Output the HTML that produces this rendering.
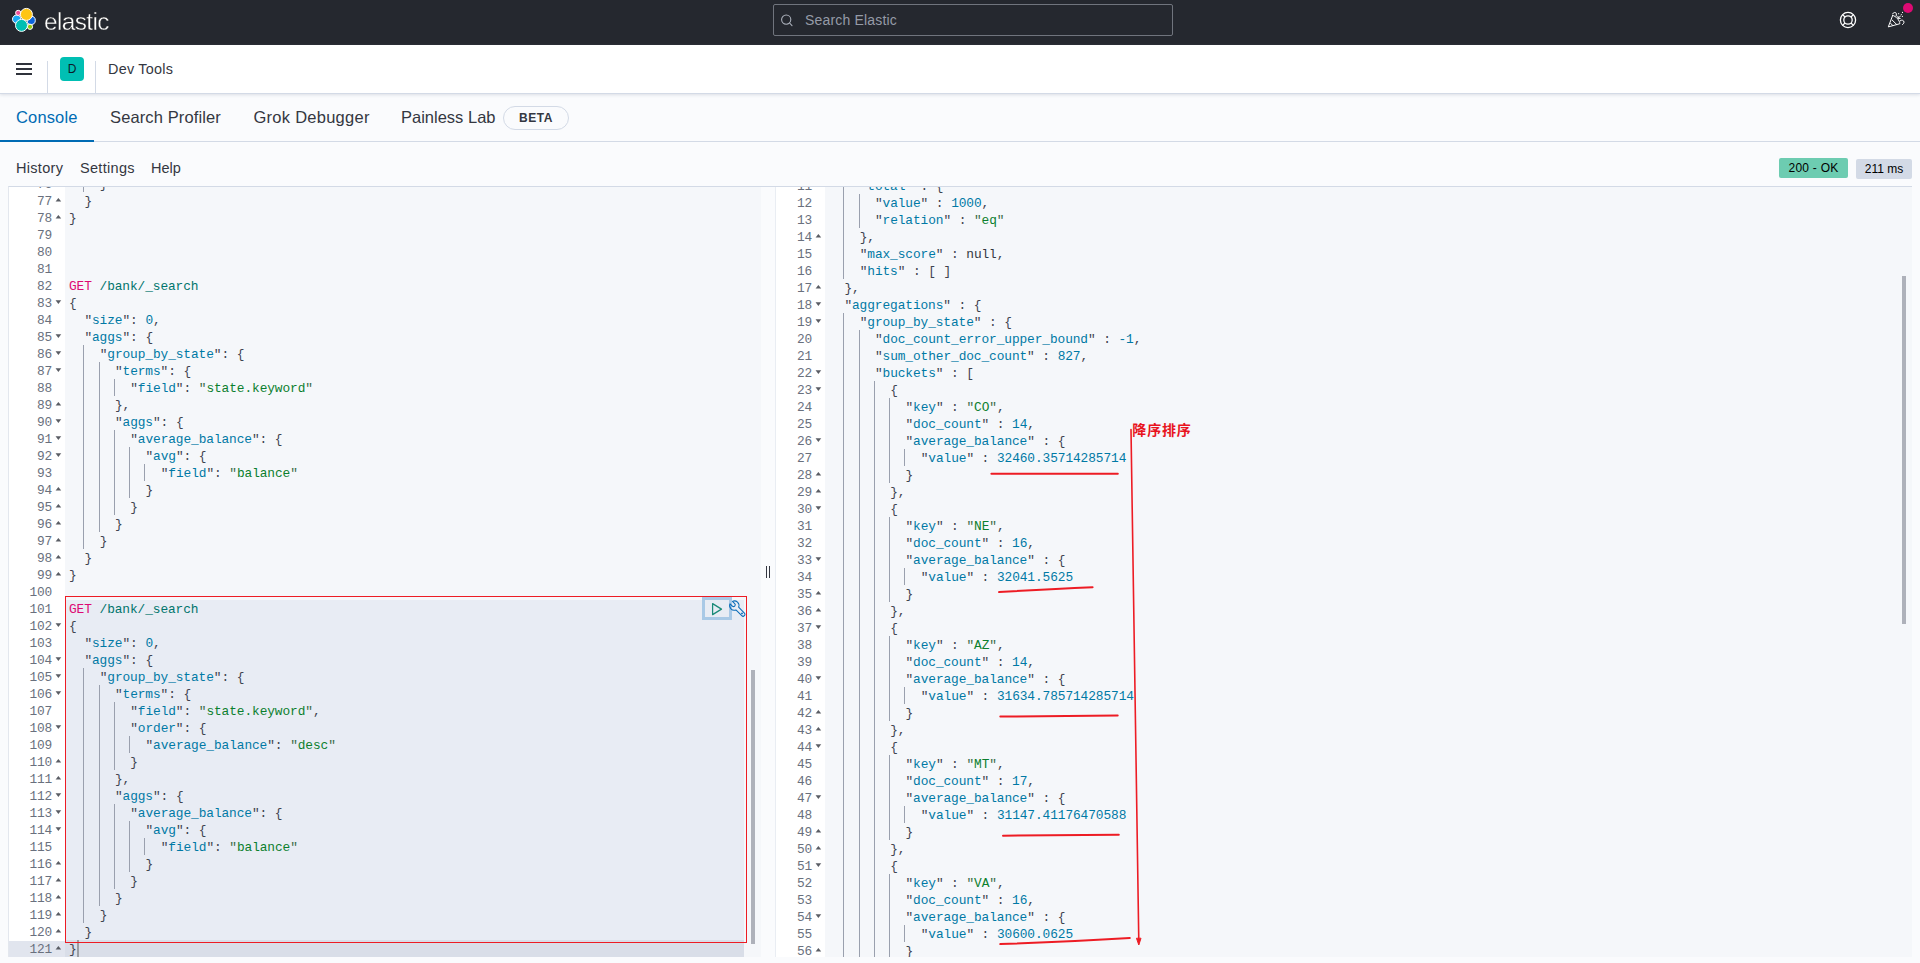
<!DOCTYPE html>
<html lang="en">
<head>
<meta charset="utf-8">
<title>Console - Dev Tools - Elastic</title>
<style>
*{box-sizing:border-box;margin:0;padding:0}
html,body{width:1920px;height:963px;overflow:hidden}
body{position:relative;background:#fafbfd;font-family:"Liberation Sans","Noto Sans CJK SC",sans-serif;color:#343741}
.abs{position:absolute;white-space:nowrap}
/* top dark header */
#top{position:absolute;left:0;top:0;width:1920px;height:45px;background:#25282f}
#brand{position:absolute;left:44px;top:6.5px;font-size:24.4px;line-height:30px;color:#fff;letter-spacing:-0.6px;-webkit-text-stroke:.4px #25282f;filter:grayscale(1)}
#search{position:absolute;left:773px;top:4px;width:400px;height:32px;border:1px solid #70747d;border-radius:2px;background:#25282f}
#search span{position:absolute;left:31px;top:7px;font-size:14px;line-height:16px;color:#959ba7;letter-spacing:.18px}
/* second header */
#bar{position:absolute;left:0;top:45px;width:1920px;height:49px;background:#fff;border-bottom:1px solid #d3dae6;box-shadow:0 1px 3px rgba(152,162,179,.3)}
.vdiv{position:absolute;top:61px;width:1px;height:32px;background:#d3dae6}
#avatar{position:absolute;left:60px;top:57px;width:24px;height:24px;border-radius:4px;background:#00bfb3;color:#0b1a2a;font-size:12px;line-height:24px;text-align:center}
#crumb{left:108px;top:61px;font-size:14.4px;line-height:16px;color:#343741;letter-spacing:.25px}
/* tabs */
.tab{top:107px;font-size:16.5px;line-height:20px;color:#343741}
#tabline{position:absolute;left:0;top:141px;width:1920px;height:1px;background:#d3dae6}
#tabsel{position:absolute;left:0;top:140px;width:94px;height:2px;background:#006bb4}
#beta{position:absolute;left:503px;top:106px;width:66px;height:24px;border:1px solid #d3dae6;border-radius:12px;font-size:12px;font-weight:bold;line-height:22px;text-align:center;letter-spacing:.6px;color:#343741}
.menu{top:160px;font-size:14px;line-height:16px;color:#343741}
.badge{position:absolute;font-size:12px;line-height:20px;text-align:center;border-radius:2px;color:#000;white-space:nowrap}
/* editors */
.ed{position:absolute;top:186px;height:771px;overflow:hidden;background:#f5f7fa;border-top:1px solid #d3dae6;font-family:"Liberation Mono","DejaVu Sans Mono",monospace;font-size:12.83px;line-height:17px}
.gut{position:absolute;left:0;top:0;height:771px;background:#fff;color:#69707d;text-align:right}
.gl{height:17px;padding-right:13.2px;position:relative;white-space:pre;letter-spacing:-.3px}
.ga{background:#e1e5ee}
.fo,.fc{position:absolute;right:4px;top:5px;width:0;height:0;border-left:3px solid transparent;border-right:3px solid transparent}
.fo{border-top:4px solid #5a5d64;transform:translate(.4px,.2px) scale(.94,.95)}
.fc{border-bottom:4px solid #5a5d64;top:5px;transform:translate(.4px,-.2px) scale(.94,.86)}
.code{position:absolute;top:0;height:771px;color:#343741}
.ln{height:17px;white-space:pre;position:relative}
.ln span{letter-spacing:-.09px}
.ig{display:inline-block;width:15.28px;height:17px;vertical-align:top;position:relative;top:-1px;background:linear-gradient(#9aa0ae,#9aa0ae) right top/1px 100% no-repeat}
.m{color:#dd0a73}.u{color:#00756c}.v{color:#0079a5}.s{color:#0b7f2e}.sq{color:#3a6b47}.n{color:#0079a5}.k{color:#343741}.p{color:#3f4450}
.inner{position:absolute;left:0;width:100%}
</style>
</head>
<body>
<div id="top">
  <svg class="abs" style="left:10px;top:6px" width="28" height="28" viewBox="10 6 28 28">
    <g stroke="#fff" stroke-width="1">
      <circle cx="16.7" cy="19.2" r="4.2" fill="#1ba9f5"/>
      <circle cx="31.2" cy="20.4" r="4.1" fill="#0b64dd"/>
      <circle cx="18.2" cy="12.9" r="2.6" fill="#f04e98"/>
      <circle cx="30" cy="26.8" r="2.6" fill="#93c90e"/>
      <circle cx="26.4" cy="14.4" r="6" fill="#fec514"/>
      <circle cx="21.5" cy="25.4" r="6" fill="#00bfb3"/>
    </g>
  </svg>
  <div id="brand" class="abs">elastic</div>
  <div id="search">
    <svg class="abs" style="left:5px;top:6.7px" width="16" height="16" viewBox="0 0 16 16" fill="none" stroke="#abb0bb" stroke-width="1.1" stroke-linecap="round"><circle cx="7.2" cy="7.6" r="4.6"/><path d="M10.6 11 L13 13.6"/></svg>
    <span>Search Elastic</span>
  </div>
  <svg class="abs" style="left:1839px;top:11px" width="18" height="18" viewBox="0 0 18 18" fill="none" stroke="#fff" stroke-width="1.3"><circle cx="9" cy="9" r="7.6"/><circle cx="9" cy="9" r="4.2"/><path d="M3.6 3.6l2.4 2.4M14.4 3.6l-2.4 2.4M3.6 14.4l2.4-2.4M14.4 14.4l-2.4-2.4"/></svg>
  <svg class="abs" style="left:1884px;top:8px" width="24" height="24" viewBox="1884 8 24 24" fill="none" stroke="#fff" stroke-width="1" stroke-linejoin="round" stroke-linecap="round"><path d="M1892.7 15.4 L1888.3 26.9 L1899.9 23.7 C1899.6 20.4 1896.2 16.2 1892.7 15.4 Z"/><path d="M1892.3 20.2 L1896.7 24.5 M1890.7 23.4 L1892.9 25.6"/><path d="M1892.7 13.7 C1893.3 12 1896.2 12 1896.4 13.8 C1896.5 14.8 1896 15.2 1896.1 16"/><path d="M1900.3 20.7 C1901.8 19.4 1904.1 20.4 1904 22.2 C1903.9 23.4 1903.1 24.2 1902.4 24.6"/><path d="M1898 18.2 L1900.4 16.2 M1897.9 16.3 L1898 18.2 L1900.2 18.5"/><path d="M1898.7 13.6v.1M1901.3 14.5v.1M1902.5 12.4v.1M1902.4 16.4v.1" stroke-width="1.15"/></svg>
  <div class="abs" style="left:1902.7px;top:2.7px;width:10.6px;height:10.6px;border-radius:6px;background:#dd0a73"></div>
</div>
<div id="bar"></div>
<svg class="abs" style="left:16px;top:61px" width="16" height="16" viewBox="0 0 16 16" fill="#2f323b"><rect x="0" y="2" width="16" height="2"/><rect x="0" y="7" width="16" height="2"/><rect x="0" y="12" width="16" height="2"/></svg>
<div class="vdiv" style="left:47px"></div>
<div id="avatar">D</div>
<div class="vdiv" style="left:95px"></div>
<div id="crumb" class="abs">Dev Tools</div>

<div id="tabline"></div><div id="tabsel"></div>
<div class="abs tab" style="left:16px;color:#006bb4;letter-spacing:.15px">Console</div>
<div class="abs tab" style="left:110px;letter-spacing:.12px">Search Profiler</div>
<div class="abs tab" style="left:253.5px;letter-spacing:.26px">Grok Debugger</div>
<div class="abs tab" style="left:401px">Painless Lab</div>
<div id="beta">BETA</div>

<div class="abs menu" style="left:16px;font-size:14.5px;letter-spacing:.3px">History</div>
<div class="abs menu" style="left:80px;font-size:14.5px;letter-spacing:.3px">Settings</div>
<div class="abs menu" style="left:151px;font-size:14.5px;letter-spacing:0">Help</div>
<div class="badge" style="left:1779px;top:158px;width:69px;height:20px;background:#6dccb1;letter-spacing:.25px">200 - OK</div>
<div class="badge" style="left:1856px;top:159px;width:56px;height:20px;background:#d3dae6">211 ms</div>

<div class="abs" style="left:8px;top:186px;width:1904px;height:1px;background:#d3dae6"></div>
<!-- left editor -->
<div class="ed" id="edl" style="left:8px;width:753px;border-left:1px solid #e3e7ee">
  <div class="abs" style="left:56px;top:413px;width:679px;height:340px;background:#e8ecf4"></div>
  <div class="abs" style="left:56px;top:753px;width:679px;height:17px;background:#d9dee8"></div>
  <div class="gut" style="width:56px"><div class="inner" style="top:-11px">
<div class="gl">76<i class="fc"></i></div>
<div class="gl">77<i class="fc"></i></div>
<div class="gl">78<i class="fc"></i></div>
<div class="gl">79</div>
<div class="gl">80</div>
<div class="gl">81</div>
<div class="gl">82</div>
<div class="gl">83<i class="fo"></i></div>
<div class="gl">84</div>
<div class="gl">85<i class="fo"></i></div>
<div class="gl">86<i class="fo"></i></div>
<div class="gl">87<i class="fo"></i></div>
<div class="gl">88</div>
<div class="gl">89<i class="fc"></i></div>
<div class="gl">90<i class="fo"></i></div>
<div class="gl">91<i class="fo"></i></div>
<div class="gl">92<i class="fo"></i></div>
<div class="gl">93</div>
<div class="gl">94<i class="fc"></i></div>
<div class="gl">95<i class="fc"></i></div>
<div class="gl">96<i class="fc"></i></div>
<div class="gl">97<i class="fc"></i></div>
<div class="gl">98<i class="fc"></i></div>
<div class="gl">99<i class="fc"></i></div>
<div class="gl">100</div>
<div class="gl">101</div>
<div class="gl">102<i class="fo"></i></div>
<div class="gl">103</div>
<div class="gl">104<i class="fo"></i></div>
<div class="gl">105<i class="fo"></i></div>
<div class="gl">106<i class="fo"></i></div>
<div class="gl">107</div>
<div class="gl">108<i class="fo"></i></div>
<div class="gl">109</div>
<div class="gl">110<i class="fc"></i></div>
<div class="gl">111<i class="fc"></i></div>
<div class="gl">112<i class="fo"></i></div>
<div class="gl">113<i class="fo"></i></div>
<div class="gl">114<i class="fo"></i></div>
<div class="gl">115</div>
<div class="gl">116<i class="fc"></i></div>
<div class="gl">117<i class="fc"></i></div>
<div class="gl">118<i class="fc"></i></div>
<div class="gl">119<i class="fc"></i></div>
<div class="gl">120<i class="fc"></i></div>
<div class="gl ga">121<i class="fc"></i></div>
  </div></div>
  <div class="code" style="left:60px;width:690px"><div class="inner" style="top:-11px">
<div class="ln"><span class="ig">  </span>  <span class="p">}</span></div>
<div class="ln">  <span class="p">}</span></div>
<div class="ln"><span class="p">}</span></div>
<div class="ln"></div>
<div class="ln"></div>
<div class="ln"></div>
<div class="ln"><span class="m">GET</span> <span class="u">/bank/_search</span></div>
<div class="ln"><span class="p">{</span></div>
<div class="ln">  <span class="p">"</span><span class="v">size</span><span class="p">"</span><span class="p">:</span> <span class="n">0</span><span class="p">,</span></div>
<div class="ln">  <span class="p">"</span><span class="v">aggs</span><span class="p">"</span><span class="p">:</span> <span class="p">{</span></div>
<div class="ln"><span class="ig">  </span>  <span class="p">"</span><span class="v">group_by_state</span><span class="p">"</span><span class="p">:</span> <span class="p">{</span></div>
<div class="ln"><span class="ig">  </span><span class="ig">  </span>  <span class="p">"</span><span class="v">terms</span><span class="p">"</span><span class="p">:</span> <span class="p">{</span></div>
<div class="ln"><span class="ig">  </span><span class="ig">  </span><span class="ig">  </span>  <span class="p">"</span><span class="v">field</span><span class="p">"</span><span class="p">:</span> <span class="sq">"</span><span class="s">state.keyword</span><span class="sq">"</span></div>
<div class="ln"><span class="ig">  </span><span class="ig">  </span>  <span class="p">}</span><span class="p">,</span></div>
<div class="ln"><span class="ig">  </span><span class="ig">  </span>  <span class="p">"</span><span class="v">aggs</span><span class="p">"</span><span class="p">:</span> <span class="p">{</span></div>
<div class="ln"><span class="ig">  </span><span class="ig">  </span><span class="ig">  </span>  <span class="p">"</span><span class="v">average_balance</span><span class="p">"</span><span class="p">:</span> <span class="p">{</span></div>
<div class="ln"><span class="ig">  </span><span class="ig">  </span><span class="ig">  </span><span class="ig">  </span>  <span class="p">"</span><span class="v">avg</span><span class="p">"</span><span class="p">:</span> <span class="p">{</span></div>
<div class="ln"><span class="ig">  </span><span class="ig">  </span><span class="ig">  </span><span class="ig">  </span><span class="ig">  </span>  <span class="p">"</span><span class="v">field</span><span class="p">"</span><span class="p">:</span> <span class="sq">"</span><span class="s">balance</span><span class="sq">"</span></div>
<div class="ln"><span class="ig">  </span><span class="ig">  </span><span class="ig">  </span><span class="ig">  </span>  <span class="p">}</span></div>
<div class="ln"><span class="ig">  </span><span class="ig">  </span><span class="ig">  </span>  <span class="p">}</span></div>
<div class="ln"><span class="ig">  </span><span class="ig">  </span>  <span class="p">}</span></div>
<div class="ln"><span class="ig">  </span>  <span class="p">}</span></div>
<div class="ln">  <span class="p">}</span></div>
<div class="ln"><span class="p">}</span></div>
<div class="ln"></div>
<div class="ln"><span class="m">GET</span> <span class="u">/bank/_search</span></div>
<div class="ln"><span class="p">{</span></div>
<div class="ln">  <span class="p">"</span><span class="v">size</span><span class="p">"</span><span class="p">:</span> <span class="n">0</span><span class="p">,</span></div>
<div class="ln">  <span class="p">"</span><span class="v">aggs</span><span class="p">"</span><span class="p">:</span> <span class="p">{</span></div>
<div class="ln"><span class="ig">  </span>  <span class="p">"</span><span class="v">group_by_state</span><span class="p">"</span><span class="p">:</span> <span class="p">{</span></div>
<div class="ln"><span class="ig">  </span><span class="ig">  </span>  <span class="p">"</span><span class="v">terms</span><span class="p">"</span><span class="p">:</span> <span class="p">{</span></div>
<div class="ln"><span class="ig">  </span><span class="ig">  </span><span class="ig">  </span>  <span class="p">"</span><span class="v">field</span><span class="p">"</span><span class="p">:</span> <span class="sq">"</span><span class="s">state.keyword</span><span class="sq">"</span><span class="p">,</span></div>
<div class="ln"><span class="ig">  </span><span class="ig">  </span><span class="ig">  </span>  <span class="p">"</span><span class="v">order</span><span class="p">"</span><span class="p">:</span> <span class="p">{</span></div>
<div class="ln"><span class="ig">  </span><span class="ig">  </span><span class="ig">  </span><span class="ig">  </span>  <span class="p">"</span><span class="v">average_balance</span><span class="p">"</span><span class="p">:</span> <span class="sq">"</span><span class="s">desc</span><span class="sq">"</span></div>
<div class="ln"><span class="ig">  </span><span class="ig">  </span><span class="ig">  </span>  <span class="p">}</span></div>
<div class="ln"><span class="ig">  </span><span class="ig">  </span>  <span class="p">}</span><span class="p">,</span></div>
<div class="ln"><span class="ig">  </span><span class="ig">  </span>  <span class="p">"</span><span class="v">aggs</span><span class="p">"</span><span class="p">:</span> <span class="p">{</span></div>
<div class="ln"><span class="ig">  </span><span class="ig">  </span><span class="ig">  </span>  <span class="p">"</span><span class="v">average_balance</span><span class="p">"</span><span class="p">:</span> <span class="p">{</span></div>
<div class="ln"><span class="ig">  </span><span class="ig">  </span><span class="ig">  </span><span class="ig">  </span>  <span class="p">"</span><span class="v">avg</span><span class="p">"</span><span class="p">:</span> <span class="p">{</span></div>
<div class="ln"><span class="ig">  </span><span class="ig">  </span><span class="ig">  </span><span class="ig">  </span><span class="ig">  </span>  <span class="p">"</span><span class="v">field</span><span class="p">"</span><span class="p">:</span> <span class="sq">"</span><span class="s">balance</span><span class="sq">"</span></div>
<div class="ln"><span class="ig">  </span><span class="ig">  </span><span class="ig">  </span><span class="ig">  </span>  <span class="p">}</span></div>
<div class="ln"><span class="ig">  </span><span class="ig">  </span><span class="ig">  </span>  <span class="p">}</span></div>
<div class="ln"><span class="ig">  </span><span class="ig">  </span>  <span class="p">}</span></div>
<div class="ln"><span class="ig">  </span>  <span class="p">}</span></div>
<div class="ln">  <span class="p">}</span></div>
<div class="ln"><span class="p">}</span></div>
  </div></div>
  <div class="abs" style="left:68px;top:753px;width:2px;height:17px;background:#9a9da3"></div>
  <div class="abs" style="left:742px;top:483px;width:4px;height:274px;background:#aeb1ba"></div>
</div>
<!-- request actions -->
<div class="abs" style="left:702px;top:597px;width:30px;height:23px;border:3px solid #a9c9e6;background:#e8ecf4"></div>
<svg class="abs" style="left:708px;top:600px" width="18" height="18" viewBox="708 600 18 18" fill="none" stroke="#1a8a78" stroke-width="1.25" stroke-linejoin="round"><path d="M712.6 603.6 L721.5 609.1 L712.6 614.6 Z"/></svg>
<svg class="abs" style="left:727px;top:598px" width="22" height="22" viewBox="727 598 22 22" fill="none" stroke="#0a6cb8" stroke-width="1.05" stroke-linecap="round" stroke-linejoin="round"><g transform="translate(734.3 605.6) rotate(-45)"><path d="M-1.7 -4.3 A4.6 4.6 0 0 0 -1.9 4.2 L-1.9 12.4 A1.9 1.9 0 0 0 1.9 12.4 L1.9 4.2 A4.6 4.6 0 0 0 1.7 -4.3 L1.7 -1.1 A1.7 1.7 0 0 1 -1.7 -1.1 Z"/><circle cx="0" cy="10.9" r=".4" fill="#0a6cb8"/></g></svg>
<!-- red annotation box -->
<div class="abs" style="left:65px;top:596px;width:682px;height:347px;border:1px solid #ed1c24"></div>
<!-- resizer -->
<div class="abs" style="left:766px;top:566px;width:1.3px;height:12px;background:#343741"></div>
<div class="abs" style="left:769px;top:566px;width:1.3px;height:12px;background:#343741"></div>

<div class="abs" style="left:775px;top:187px;width:1px;height:770px;background:#e9edf3"></div>
<!-- right editor -->
<div class="ed" id="edr" style="left:776px;width:1136px">
  <div class="gut" style="width:49px"><div class="inner" style="top:-9px">
<div class="gl">11<i class="fo"></i></div>
<div class="gl">12</div>
<div class="gl">13</div>
<div class="gl">14<i class="fc"></i></div>
<div class="gl">15</div>
<div class="gl">16</div>
<div class="gl">17<i class="fc"></i></div>
<div class="gl">18<i class="fo"></i></div>
<div class="gl">19<i class="fo"></i></div>
<div class="gl">20</div>
<div class="gl">21</div>
<div class="gl">22<i class="fo"></i></div>
<div class="gl">23<i class="fo"></i></div>
<div class="gl">24</div>
<div class="gl">25</div>
<div class="gl">26<i class="fo"></i></div>
<div class="gl">27</div>
<div class="gl">28<i class="fc"></i></div>
<div class="gl">29<i class="fc"></i></div>
<div class="gl">30<i class="fo"></i></div>
<div class="gl">31</div>
<div class="gl">32</div>
<div class="gl">33<i class="fo"></i></div>
<div class="gl">34</div>
<div class="gl">35<i class="fc"></i></div>
<div class="gl">36<i class="fc"></i></div>
<div class="gl">37<i class="fo"></i></div>
<div class="gl">38</div>
<div class="gl">39</div>
<div class="gl">40<i class="fo"></i></div>
<div class="gl">41</div>
<div class="gl">42<i class="fc"></i></div>
<div class="gl">43<i class="fc"></i></div>
<div class="gl">44<i class="fo"></i></div>
<div class="gl">45</div>
<div class="gl">46</div>
<div class="gl">47<i class="fo"></i></div>
<div class="gl">48</div>
<div class="gl">49<i class="fc"></i></div>
<div class="gl">50<i class="fc"></i></div>
<div class="gl">51<i class="fo"></i></div>
<div class="gl">52</div>
<div class="gl">53</div>
<div class="gl">54<i class="fo"></i></div>
<div class="gl">55</div>
<div class="gl">56<i class="fc"></i></div>
  </div></div>
  <div class="code" style="left:53px;width:1070px"><div class="inner" style="top:-9px">
<div class="ln"><span class="ig">  </span>  <span class="p">"</span><span class="v">total</span><span class="p">"</span><span class="p"> :</span> <span class="p">{</span></div>
<div class="ln"><span class="ig">  </span><span class="ig">  </span>  <span class="p">"</span><span class="v">value</span><span class="p">"</span><span class="p"> :</span> <span class="n">1000</span><span class="p">,</span></div>
<div class="ln"><span class="ig">  </span><span class="ig">  </span>  <span class="p">"</span><span class="v">relation</span><span class="p">"</span><span class="p"> :</span> <span class="sq">"</span><span class="s">eq</span><span class="sq">"</span></div>
<div class="ln"><span class="ig">  </span>  <span class="p">}</span><span class="p">,</span></div>
<div class="ln"><span class="ig">  </span>  <span class="p">"</span><span class="v">max_score</span><span class="p">"</span><span class="p"> :</span> <span class="k">null</span><span class="p">,</span></div>
<div class="ln"><span class="ig">  </span>  <span class="p">"</span><span class="v">hits</span><span class="p">"</span><span class="p"> :</span> <span class="p">[</span> <span class="p">]</span></div>
<div class="ln">  <span class="p">}</span><span class="p">,</span></div>
<div class="ln">  <span class="p">"</span><span class="v">aggregations</span><span class="p">"</span><span class="p"> :</span> <span class="p">{</span></div>
<div class="ln"><span class="ig">  </span>  <span class="p">"</span><span class="v">group_by_state</span><span class="p">"</span><span class="p"> :</span> <span class="p">{</span></div>
<div class="ln"><span class="ig">  </span><span class="ig">  </span>  <span class="p">"</span><span class="v">doc_count_error_upper_bound</span><span class="p">"</span><span class="p"> :</span> <span class="n">-1</span><span class="p">,</span></div>
<div class="ln"><span class="ig">  </span><span class="ig">  </span>  <span class="p">"</span><span class="v">sum_other_doc_count</span><span class="p">"</span><span class="p"> :</span> <span class="n">827</span><span class="p">,</span></div>
<div class="ln"><span class="ig">  </span><span class="ig">  </span>  <span class="p">"</span><span class="v">buckets</span><span class="p">"</span><span class="p"> :</span> <span class="p">[</span></div>
<div class="ln"><span class="ig">  </span><span class="ig">  </span><span class="ig">  </span>  <span class="p">{</span></div>
<div class="ln"><span class="ig">  </span><span class="ig">  </span><span class="ig">  </span><span class="ig">  </span>  <span class="p">"</span><span class="v">key</span><span class="p">"</span><span class="p"> :</span> <span class="sq">"</span><span class="s">CO</span><span class="sq">"</span><span class="p">,</span></div>
<div class="ln"><span class="ig">  </span><span class="ig">  </span><span class="ig">  </span><span class="ig">  </span>  <span class="p">"</span><span class="v">doc_count</span><span class="p">"</span><span class="p"> :</span> <span class="n">14</span><span class="p">,</span></div>
<div class="ln"><span class="ig">  </span><span class="ig">  </span><span class="ig">  </span><span class="ig">  </span>  <span class="p">"</span><span class="v">average_balance</span><span class="p">"</span><span class="p"> :</span> <span class="p">{</span></div>
<div class="ln"><span class="ig">  </span><span class="ig">  </span><span class="ig">  </span><span class="ig">  </span><span class="ig">  </span>  <span class="p">"</span><span class="v">value</span><span class="p">"</span><span class="p"> :</span> <span class="n">32460.35714285714</span></div>
<div class="ln"><span class="ig">  </span><span class="ig">  </span><span class="ig">  </span><span class="ig">  </span>  <span class="p">}</span></div>
<div class="ln"><span class="ig">  </span><span class="ig">  </span><span class="ig">  </span>  <span class="p">}</span><span class="p">,</span></div>
<div class="ln"><span class="ig">  </span><span class="ig">  </span><span class="ig">  </span>  <span class="p">{</span></div>
<div class="ln"><span class="ig">  </span><span class="ig">  </span><span class="ig">  </span><span class="ig">  </span>  <span class="p">"</span><span class="v">key</span><span class="p">"</span><span class="p"> :</span> <span class="sq">"</span><span class="s">NE</span><span class="sq">"</span><span class="p">,</span></div>
<div class="ln"><span class="ig">  </span><span class="ig">  </span><span class="ig">  </span><span class="ig">  </span>  <span class="p">"</span><span class="v">doc_count</span><span class="p">"</span><span class="p"> :</span> <span class="n">16</span><span class="p">,</span></div>
<div class="ln"><span class="ig">  </span><span class="ig">  </span><span class="ig">  </span><span class="ig">  </span>  <span class="p">"</span><span class="v">average_balance</span><span class="p">"</span><span class="p"> :</span> <span class="p">{</span></div>
<div class="ln"><span class="ig">  </span><span class="ig">  </span><span class="ig">  </span><span class="ig">  </span><span class="ig">  </span>  <span class="p">"</span><span class="v">value</span><span class="p">"</span><span class="p"> :</span> <span class="n">32041.5625</span></div>
<div class="ln"><span class="ig">  </span><span class="ig">  </span><span class="ig">  </span><span class="ig">  </span>  <span class="p">}</span></div>
<div class="ln"><span class="ig">  </span><span class="ig">  </span><span class="ig">  </span>  <span class="p">}</span><span class="p">,</span></div>
<div class="ln"><span class="ig">  </span><span class="ig">  </span><span class="ig">  </span>  <span class="p">{</span></div>
<div class="ln"><span class="ig">  </span><span class="ig">  </span><span class="ig">  </span><span class="ig">  </span>  <span class="p">"</span><span class="v">key</span><span class="p">"</span><span class="p"> :</span> <span class="sq">"</span><span class="s">AZ</span><span class="sq">"</span><span class="p">,</span></div>
<div class="ln"><span class="ig">  </span><span class="ig">  </span><span class="ig">  </span><span class="ig">  </span>  <span class="p">"</span><span class="v">doc_count</span><span class="p">"</span><span class="p"> :</span> <span class="n">14</span><span class="p">,</span></div>
<div class="ln"><span class="ig">  </span><span class="ig">  </span><span class="ig">  </span><span class="ig">  </span>  <span class="p">"</span><span class="v">average_balance</span><span class="p">"</span><span class="p"> :</span> <span class="p">{</span></div>
<div class="ln"><span class="ig">  </span><span class="ig">  </span><span class="ig">  </span><span class="ig">  </span><span class="ig">  </span>  <span class="p">"</span><span class="v">value</span><span class="p">"</span><span class="p"> :</span> <span class="n">31634.785714285714</span></div>
<div class="ln"><span class="ig">  </span><span class="ig">  </span><span class="ig">  </span><span class="ig">  </span>  <span class="p">}</span></div>
<div class="ln"><span class="ig">  </span><span class="ig">  </span><span class="ig">  </span>  <span class="p">}</span><span class="p">,</span></div>
<div class="ln"><span class="ig">  </span><span class="ig">  </span><span class="ig">  </span>  <span class="p">{</span></div>
<div class="ln"><span class="ig">  </span><span class="ig">  </span><span class="ig">  </span><span class="ig">  </span>  <span class="p">"</span><span class="v">key</span><span class="p">"</span><span class="p"> :</span> <span class="sq">"</span><span class="s">MT</span><span class="sq">"</span><span class="p">,</span></div>
<div class="ln"><span class="ig">  </span><span class="ig">  </span><span class="ig">  </span><span class="ig">  </span>  <span class="p">"</span><span class="v">doc_count</span><span class="p">"</span><span class="p"> :</span> <span class="n">17</span><span class="p">,</span></div>
<div class="ln"><span class="ig">  </span><span class="ig">  </span><span class="ig">  </span><span class="ig">  </span>  <span class="p">"</span><span class="v">average_balance</span><span class="p">"</span><span class="p"> :</span> <span class="p">{</span></div>
<div class="ln"><span class="ig">  </span><span class="ig">  </span><span class="ig">  </span><span class="ig">  </span><span class="ig">  </span>  <span class="p">"</span><span class="v">value</span><span class="p">"</span><span class="p"> :</span> <span class="n">31147.41176470588</span></div>
<div class="ln"><span class="ig">  </span><span class="ig">  </span><span class="ig">  </span><span class="ig">  </span>  <span class="p">}</span></div>
<div class="ln"><span class="ig">  </span><span class="ig">  </span><span class="ig">  </span>  <span class="p">}</span><span class="p">,</span></div>
<div class="ln"><span class="ig">  </span><span class="ig">  </span><span class="ig">  </span>  <span class="p">{</span></div>
<div class="ln"><span class="ig">  </span><span class="ig">  </span><span class="ig">  </span><span class="ig">  </span>  <span class="p">"</span><span class="v">key</span><span class="p">"</span><span class="p"> :</span> <span class="sq">"</span><span class="s">VA</span><span class="sq">"</span><span class="p">,</span></div>
<div class="ln"><span class="ig">  </span><span class="ig">  </span><span class="ig">  </span><span class="ig">  </span>  <span class="p">"</span><span class="v">doc_count</span><span class="p">"</span><span class="p"> :</span> <span class="n">16</span><span class="p">,</span></div>
<div class="ln"><span class="ig">  </span><span class="ig">  </span><span class="ig">  </span><span class="ig">  </span>  <span class="p">"</span><span class="v">average_balance</span><span class="p">"</span><span class="p"> :</span> <span class="p">{</span></div>
<div class="ln"><span class="ig">  </span><span class="ig">  </span><span class="ig">  </span><span class="ig">  </span><span class="ig">  </span>  <span class="p">"</span><span class="v">value</span><span class="p">"</span><span class="p"> :</span> <span class="n">30600.0625</span></div>
<div class="ln"><span class="ig">  </span><span class="ig">  </span><span class="ig">  </span><span class="ig">  </span>  <span class="p">}</span></div>
  </div></div>
  <div class="abs" style="left:1126px;top:89px;width:4px;height:348px;background:#aeb1ba"></div>
</div>

<!-- red annotations -->
<svg class="abs" style="left:960px;top:410px" width="300" height="553" viewBox="960 410 300 553" fill="none" stroke="#ed1c24" stroke-width="2" stroke-linecap="round">
  <path d="M991.4 473.8 L1117.8 473.8"/>
  <path d="M999.1 592.1 Q1050 589 1092.6 587.2"/>
  <path d="M1000.3 716.6 L1117.7 715.5"/>
  <path d="M1003 835.7 L1118.8 834.8"/>
  <path d="M1000.3 944.1 Q1070 941.6 1129.8 938"/>
  <path d="M1131 429.5 Q1135.7 687 1138.8 941" stroke-width="1.6"/>
  <path d="M1136.6 938.6 L1138.8 945 L1140.9 938.6 Z" fill="#ed1c24" stroke-width="1"/>
</svg>
<div class="abs" style="left:1132.3px;top:420px;font-size:14px;line-height:20px;letter-spacing:.85px;font-weight:bold;color:#e8141e;font-family:'Liberation Sans','Noto Sans CJK SC',sans-serif">降序排序</div>
</body>
</html>
